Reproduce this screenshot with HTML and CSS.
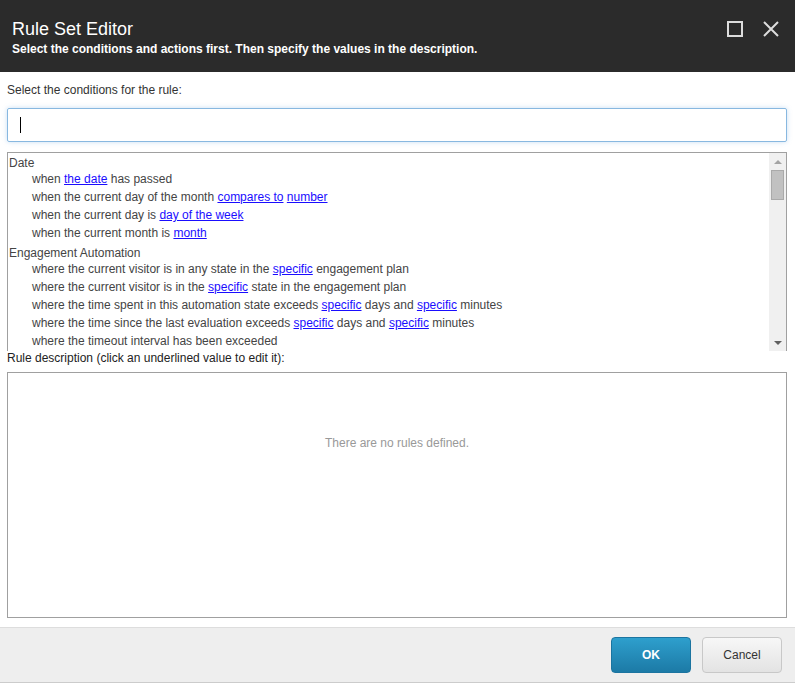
FILE: index.html
```html
<!DOCTYPE html>
<html lang="en">
<head>
    <meta charset="UTF-8">
    <title>Rule Set Editor</title>
    <link rel="stylesheet" href="styles.css">
</head>
<body>
    <div class="dialog">
        <div class="header">
            <div class="titles">
                <h1>Rule Set Editor</h1>
                <p>Select the conditions and actions first. Then specify the values in the description.</p>
            </div>
            <div class="window-buttons">
                <svg width="16" height="16" viewBox="0 0 16 16"><rect x="1" y="1" width="14" height="14" fill="none" stroke="#ddd" stroke-width="2"/></svg>
                <svg width="16" height="16" viewBox="0 0 16 16"><path d="M1 1 L15 15 M15 1 L1 15" stroke="#ddd" stroke-width="2"/></svg>
            </div>
        </div>

        <div class="content">
            <div class="label">Select the conditions for the rule:</div>
            <div class="search"><span class="caret"></span></div>

            <div class="list">
                <div class="list-items">
                    <div class="group">Date</div>
                    <div class="item">when <a href="#">the date</a> has passed</div>
                    <div class="item">when the current day of the month <a href="#">compares to</a> <a href="#">number</a></div>
                    <div class="item">when the current day is <a href="#">day of the week</a></div>
                    <div class="item">when the current month is <a href="#">month</a></div>
                    <div class="group next">Engagement Automation</div>
                    <div class="item">where the current visitor is in any state in the <a href="#">specific</a> engagement plan</div>
                    <div class="item">where the current visitor is in the <a href="#">specific</a> state in the engagement plan</div>
                    <div class="item">where the time spent in this automation state exceeds <a href="#">specific</a> days and <a href="#">specific</a> minutes</div>
                    <div class="item">where the time since the last evaluation exceeds <a href="#">specific</a> days and <a href="#">specific</a> minutes</div>
                    <div class="item">where the timeout interval has been exceeded</div>
                </div>
                <div class="scrollbar">
                    <div class="arrow up"></div>
                    <div class="thumb"></div>
                    <div class="arrow down"></div>
                </div>
            </div>

            <div class="label desc-label">Rule description (click an underlined value to edit it):</div>
            <div class="description">
                <div class="empty">There are no rules defined.</div>
            </div>
        </div>

        <div class="footer">
            <button class="btn btn-ok">OK</button>
            <button class="btn btn-cancel">Cancel</button>
        </div>
    </div>
</body>
</html>
```

FILE: styles.css
```css
body {
    margin: 0;
    padding: 0;
    background-color: #fff;
    font-family: "Liberation Sans", Arial, sans-serif;
    font-size: 12px;
    color: #333;
}
.dialog {
    width: 795px;
    height: 685px;
    display: flex;
    flex-direction: column;
}
.header {
    height: 72px;
    background-color: #2b2b2b;
    color: #fff;
    display: flex;
    justify-content: space-between;
    padding: 0 16px 0 12px;
}
.titles h1 {
    font-size: 18px;
    font-weight: normal;
    margin: 19px 0 0 0;
    line-height: 20px;
}
.titles p {
    font-size: 12px;
    font-weight: bold;
    margin: 3px 0 0 0;
    line-height: 14px;
}
.window-buttons {
    display: flex;
    gap: 20px;
    padding-top: 21px;
}
.content {
    flex: 1;
    padding: 0 8px 0 7px;
}
.label {
    margin-top: 11px;
    line-height: 14px;
    color: #333;
}
.search {
    margin-top: 11px;
    height: 32px;
    border: 1px solid #88b8e0;
    border-radius: 2px;
    box-shadow: 0 0 5px rgba(100, 160, 220, 0.35);
    display: flex;
    align-items: center;
    padding-left: 12px;
}
.caret {
    width: 1px;
    height: 16px;
    background-color: #000;
}
.list {
    margin-top: 10px;
    height: 198px;
    border: 1px solid #a0a0a0;
    border-bottom: none;
    display: flex;
    overflow: hidden;
}
.list-items {
    flex: 1;
    padding-top: 3px;
    padding-left: 1px;
    color: #444;
}
.group {
    line-height: 14px;
    color: #444;
}
.group.next {
    margin-top: 4px;
}
.item {
    line-height: 18px;
    padding-left: 23px;
}
.item a {
    color: #1a0dff;
    text-decoration: underline;
}
.scrollbar {
    width: 17px;
    background-color: #f0f0f0;
    display: flex;
    flex-direction: column;
    align-items: center;
}
.arrow {
    width: 0;
    height: 0;
    border-left: 4px solid transparent;
    border-right: 4px solid transparent;
}
.arrow.up {
    margin-top: 7px;
    border-bottom: 4px solid #a3a3a3;
}
.arrow.down {
    margin-top: auto;
    margin-bottom: 6px;
    border-top: 4px solid #606060;
}
.thumb {
    width: 13px;
    height: 30px;
    margin-top: 6px;
    background-color: #c1c1c1;
    border: 1px solid #aaa;
    box-sizing: border-box;
}
.desc-label {
    margin-top: 0px;
    color: #222;
}
.description {
    margin-top: 7px;
    height: 244px;
    border: 1px solid #a0a0a0;
    display: flex;
    justify-content: center;
}
.empty {
    margin-top: 63px;
    color: #999;
}
.footer {
    height: 54px;
    margin-bottom: 2px;
    background-color: #eee;
    border-top: 1px solid #ddd;
    border-bottom: 1px solid #ccc;
    display: flex;
    justify-content: flex-end;
    align-items: center;
    gap: 11px;
    padding-right: 13px;
}
.btn {
    width: 80px;
    height: 36px;
    border-radius: 4px;
    font-family: "Liberation Sans", Arial, sans-serif;
    font-size: 12px;
    cursor: pointer;
}
.btn-ok {
    background: linear-gradient(#2e9fcd, #1c7aa6);
    border: 1px solid #1b74a0;
    color: #fff;
    font-weight: bold;
}
.btn-cancel {
    background: linear-gradient(#f7f7f7, #e3e3e3);
    border: 1px solid #c8c8c8;
    color: #333;
}
```
